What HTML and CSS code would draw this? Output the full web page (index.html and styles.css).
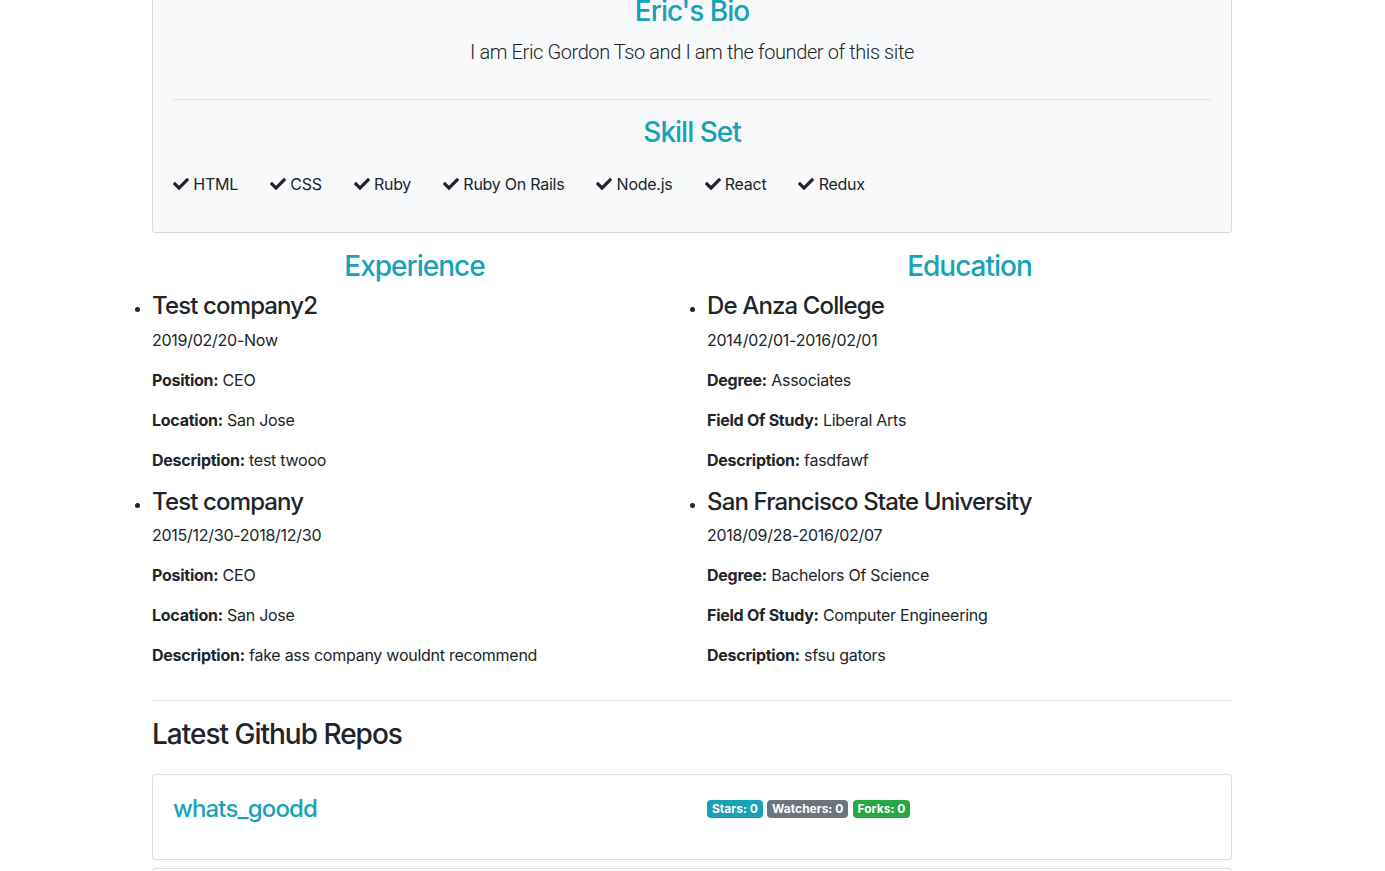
FILE: index.html
```html
<!DOCTYPE html>
<html lang="en">
<head>
<meta charset="utf-8">
<title>Eric's Profile</title>
<link rel="stylesheet" href="styles.css">
</head>
<body>
<div class="container">
  <div class="card bio-card">
    <div class="card-body">
      <h3 class="title-info center">Eric's Bio</h3>
      <p class="lead center">I am Eric Gordon Tso and I am the founder of this site</p>
      <hr class="rule bio-rule">
      <h3 class="title-info center">Skill Set</h3>
      <div class="skills">
        <span class="skill"><svg class="check" viewBox="0 0 512 512"><path d="M173.898 439.404l-166.4-166.4c-9.997-9.997-9.997-26.206 0-36.204l36.203-36.204c9.997-9.998 26.207-9.998 36.204 0L192 312.69 432.095 72.596c9.997-9.997 26.207-9.997 36.204 0l36.203 36.204c9.997 9.997 9.997 26.206 0 36.204l-294.4 294.401c-9.998 9.997-26.207 9.997-36.204-.001z"/></svg> HTML</span>
        <span class="skill"><svg class="check" viewBox="0 0 512 512"><path d="M173.898 439.404l-166.4-166.4c-9.997-9.997-9.997-26.206 0-36.204l36.203-36.204c9.997-9.998 26.207-9.998 36.204 0L192 312.69 432.095 72.596c9.997-9.997 26.207-9.997 36.204 0l36.203 36.204c9.997 9.997 9.997 26.206 0 36.204l-294.4 294.401c-9.998 9.997-26.207 9.997-36.204-.001z"/></svg> CSS</span>
        <span class="skill"><svg class="check" viewBox="0 0 512 512"><path d="M173.898 439.404l-166.4-166.4c-9.997-9.997-9.997-26.206 0-36.204l36.203-36.204c9.997-9.998 26.207-9.998 36.204 0L192 312.69 432.095 72.596c9.997-9.997 26.207-9.997 36.204 0l36.203 36.204c9.997 9.997 9.997 26.206 0 36.204l-294.4 294.401c-9.998 9.997-26.207 9.997-36.204-.001z"/></svg> Ruby</span>
        <span class="skill"><svg class="check" viewBox="0 0 512 512"><path d="M173.898 439.404l-166.4-166.4c-9.997-9.997-9.997-26.206 0-36.204l36.203-36.204c9.997-9.998 26.207-9.998 36.204 0L192 312.69 432.095 72.596c9.997-9.997 26.207-9.997 36.204 0l36.203 36.204c9.997 9.997 9.997 26.206 0 36.204l-294.4 294.401c-9.998 9.997-26.207 9.997-36.204-.001z"/></svg> Ruby On Rails</span>
        <span class="skill"><svg class="check" viewBox="0 0 512 512"><path d="M173.898 439.404l-166.4-166.4c-9.997-9.997-9.997-26.206 0-36.204l36.203-36.204c9.997-9.998 26.207-9.998 36.204 0L192 312.69 432.095 72.596c9.997-9.997 26.207-9.997 36.204 0l36.203 36.204c9.997 9.997 9.997 26.206 0 36.204l-294.4 294.401c-9.998 9.997-26.207 9.997-36.204-.001z"/></svg> Node.js</span>
        <span class="skill"><svg class="check" viewBox="0 0 512 512"><path d="M173.898 439.404l-166.4-166.4c-9.997-9.997-9.997-26.206 0-36.204l36.203-36.204c9.997-9.998 26.207-9.998 36.204 0L192 312.69 432.095 72.596c9.997-9.997 26.207-9.997 36.204 0l36.203 36.204c9.997 9.997 9.997 26.206 0 36.204l-294.4 294.401c-9.998 9.997-26.207 9.997-36.204-.001z"/></svg> React</span>
        <span class="skill"><svg class="check" viewBox="0 0 512 512"><path d="M173.898 439.404l-166.4-166.4c-9.997-9.997-9.997-26.206 0-36.204l36.203-36.204c9.997-9.998 26.207-9.998 36.204 0L192 312.69 432.095 72.596c9.997-9.997 26.207-9.997 36.204 0l36.203 36.204c9.997 9.997 9.997 26.206 0 36.204l-294.4 294.401c-9.998 9.997-26.207 9.997-36.204-.001z"/></svg> Redux</span>
      </div>
    </div>
  </div>

  <div class="row">
    <div class="col">
      <h3 class="title-info center">Experience</h3>
      <ul class="entries">
        <li>
          <h4 class="entry-title">Test company2</h4>
          <p>2019/02/20-Now</p>
          <p><strong>Position:</strong> CEO</p>
          <p><strong>Location:</strong> San Jose</p>
          <p><strong>Description:</strong> test twooo</p>
        </li>
        <li>
          <h4 class="entry-title">Test company</h4>
          <p>2015/12/30-2018/12/30</p>
          <p><strong>Position:</strong> CEO</p>
          <p><strong>Location:</strong> San Jose</p>
          <p><strong>Description:</strong> fake ass company wouldnt recommend</p>
        </li>
      </ul>
    </div>
    <div class="col">
      <h3 class="title-info center">Education</h3>
      <ul class="entries">
        <li>
          <h4 class="entry-title">De Anza College</h4>
          <p>2014/02/01-2016/02/01</p>
          <p><strong>Degree:</strong> Associates</p>
          <p><strong>Field Of Study:</strong> Liberal Arts</p>
          <p><strong>Description:</strong> fasdfawf</p>
        </li>
        <li>
          <h4 class="entry-title">San Francisco State University</h4>
          <p>2018/09/28-2016/02/07</p>
          <p><strong>Degree:</strong> Bachelors Of Science</p>
          <p><strong>Field Of Study:</strong> Computer Engineering</p>
          <p><strong>Description:</strong> sfsu gators</p>
        </li>
      </ul>
    </div>
  </div>

  <hr class="rule section-rule">
  <h3 class="repos-title">Latest Github Repos</h3>
  <div class="card repo-card">
    <div class="card-body">
      <div class="row">
        <div class="col">
          <h4 class="repo-name"><a href="#">whats_goodd</a></h4>
          <p class="repo-desc"></p>
        </div>
        <div class="col">
          <span class="badge badge-info">Stars: 0</span>
          <span class="badge badge-secondary">Watchers: 0</span>
          <span class="badge badge-success">Forks: 0</span>
        </div>
      </div>
    </div>
  </div>
  <div class="card repo-card">
    <div class="card-body">
      <div class="row">
        <div class="col">
          <h4 class="repo-name"><a href="#">hello_world</a></h4>
          <p class="repo-desc"></p>
        </div>
        <div class="col">
          <span class="badge badge-info">Stars: 0</span>
          <span class="badge badge-secondary">Watchers: 0</span>
          <span class="badge badge-success">Forks: 0</span>
        </div>
      </div>
    </div>
  </div>
</div>
</body>
</html>
```

FILE: styles.css
```css
* { box-sizing: border-box; }

html, body { margin: 0; padding: 0; }

body {
  font-family: Inter, "Noto Sans", "Liberation Sans", sans-serif;
  font-size: 16px;
  line-height: 1.5;
  letter-spacing: -0.016em;
  color: #212529;
  background: #fff;
}

.container {
  width: 1080px;
  margin: -26px 0 0 calc(50% - 540.5px);
}

h3, h4 { margin: 0 0 8px; font-weight: 500; line-height: 1.2; letter-spacing: -0.036em; }
h3 { font-size: 28px; }
h4 { font-size: 24px; }
p { margin: 0 0 16px; }
strong { font-weight: 700; }

.center { text-align: center; }
.title-info { color: #17a2b8; }

.card {
  background: #fff;
  border: 1px solid rgba(0, 0, 0, 0.125);
  border-radius: 4px;
}
.card-body { padding: 20px; }

.bio-card { background: #f8f9fa; margin-bottom: 17px; }

.lead {
  font-family: Roboto, Inter, sans-serif;
  font-size: 20px;
  font-weight: 300;
  letter-spacing: -0.02em;
}

.rule {
  border: 0;
  border-top: 1px solid rgba(0, 0, 0, 0.1);
  margin: 16px 0;
  height: 0;
}
.bio-rule { margin-top: 32px; }

.skills {
  display: flex;
  flex-wrap: wrap;
  gap: 32px;
  padding: 15px 0 16px;
}
.skill { display: inline-flex; align-items: center; white-space: pre; }
.check { width: 16px; height: 16px; fill: #212529; }

.row {
  display: flex;
  margin: 0 -15px;
}
.col {
  flex: 0 0 50%;
  max-width: 50%;
  padding: 0 15px;
}

.entries {
  list-style: disc;
  padding-left: 0;
  margin: 0;
}
.entry-title { margin-bottom: 7px; }

.section-rule { margin: 17px 0 17px; }

.repos-title { color: #212529; margin-bottom: 22px; }

.repo-card { margin-bottom: 8px; }
.repo-name a { color: #17a2b8; text-decoration: none; }
.repo-desc { margin-bottom: 15px; }

.badge {
  display: inline-block;
  padding: 3px 5px;
  font-size: 12px;
  font-weight: 700;
  line-height: 1;
  letter-spacing: 0;
  color: #fff;
  border-radius: 4px;
  white-space: nowrap;
  vertical-align: baseline;
}
.badge-info { background: #17a2b8; }
.badge-secondary { background: #6c757d; }
.badge-success { background: #28a745; }
```
